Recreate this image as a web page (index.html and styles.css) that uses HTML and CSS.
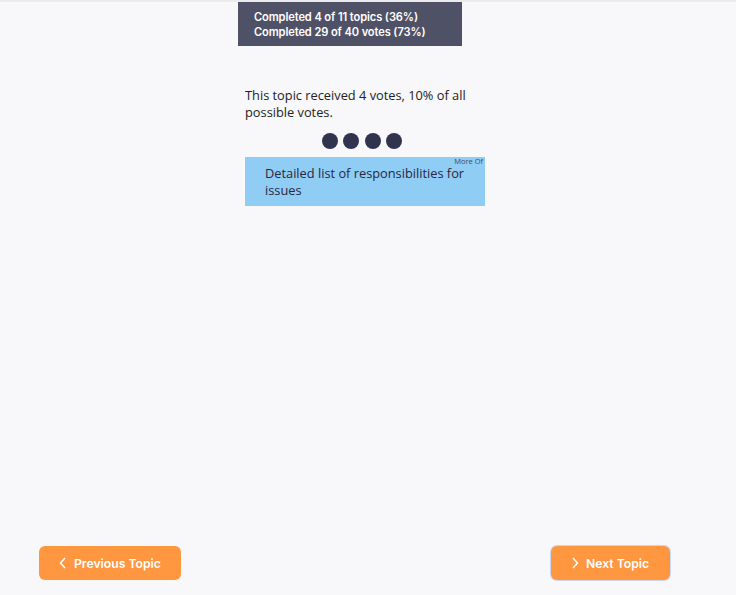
FILE: index.html
```html
<!DOCTYPE html>
<html>
<head>
<meta charset="utf-8">
<link rel="stylesheet" href="styles.css">
</head>
<body>
<div class="page">
  <div class="topline"></div>
  <div class="progress">
    <div>Completed 4 of 11 topics (36%)</div>
    <div>Completed 29 of 40 votes (73%)</div>
  </div>
  <div class="content">
    <p class="summary">This topic received 4 votes, 10% of all possible votes.</p>
    <div class="dots"><span></span><span></span><span></span><span></span></div>
    <div class="card">
      <span class="more">More Of</span>
      <p>Detailed list of responsibilities for issues</p>
    </div>
  </div>
  <div class="spacer"></div>
  <div class="nav">
    <button class="btn prev"><svg width="8" height="12" viewBox="0 0 8 12"><path d="M6 1 L1.5 6 L6 11" fill="none" stroke="#fff" stroke-width="1.5"/></svg>Previous Topic</button>
    <button class="btn next"><svg width="8" height="12" viewBox="0 0 8 12"><path d="M2 1 L6.5 6 L2 11" fill="none" stroke="#fff" stroke-width="1.5"/></svg>Next Topic</button>
  </div>
</div>
</body>
</html>
```
FILE: styles.css
```css
html, body {
  margin: 0;
  padding: 0;
  background: #f8f8fa;
}
.page {
  width: 736px;
  height: 595px;
  display: flex;
  flex-direction: column;
  align-items: center;
}
.topline {
  width: 100%;
  height: 2px;
  background: #ececef;
  flex: none;
}
.progress {
  width: 224px;
  height: 44px;
  box-sizing: border-box;
  background: #4f5167;
  color: #fff;
  font-family: Inter, sans-serif;
  font-weight: 600;
  font-size: 11.1px;
  line-height: 15px;
  padding: 8px 0 0 16px;
  letter-spacing: -0.1px;
  margin-left: -36px;
}
.content {
  width: 240px;
  margin-top: 41px;
  font-family: "Open Sans", sans-serif;
  color: #222;
  margin-left: -6px;
}
.summary {
  margin: 0;
  font-size: 12.8px;
  line-height: 17px;
}
.dots {
  display: flex;
  justify-content: center;
  gap: 5.5px;
  margin-top: 12px;
  margin-left: -6px;
}
.dots span {
  width: 16px;
  height: 16px;
  border-radius: 50%;
  background: #31344f;
}
.card {
  position: relative;
  margin-top: 8px;
  background: #90cdf4;
  height: 49px;
  box-sizing: border-box;
  padding: 8px 10px 0 20px;
}
.card p {
  margin: 0;
  font-size: 12.8px;
  line-height: 17px;
  color: #2a2540;
}
.more {
  position: absolute;
  top: 1px;
  right: 2px;
  font-size: 7.5px;
  line-height: 7px;
  color: #444a5a;
}
.spacer {
  flex: 1;
}
.nav {
  width: 100%;
  box-sizing: border-box;
  display: flex;
  justify-content: space-between;
  padding: 0 66px 15px 39px;
}
.btn {
  height: 34px;
  border: none;
  border-radius: 6px;
  background: #ff9640;
  color: #fff;
  font-family: Inter, sans-serif;
  font-weight: 600;
  font-size: 12.2px;
  display: flex;
  align-items: center;
  gap: 7px;
  cursor: pointer;
}
.prev {
  width: 142px;
  padding: 0 0 0 20px;
}
.next {
  width: 119px;
  padding: 0 0 0 20px;
  box-shadow: 0 0 0 1px #c9d8f0;
}
```
